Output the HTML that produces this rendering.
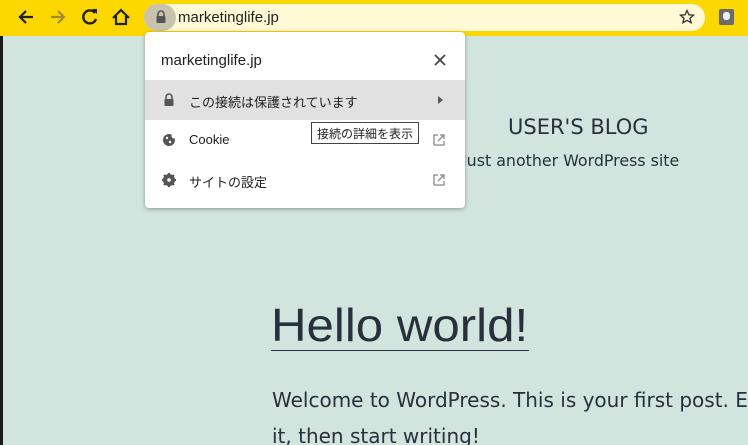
<!DOCTYPE html>
<html><head><meta charset="utf-8"><style>
*{margin:0;padding:0;box-sizing:border-box}
html,body{width:748px;height:445px;overflow:hidden}
body{background:#d1e4dd;font-family:"Liberation Sans","Noto Sans CJK JP",sans-serif;position:relative}
.bar{position:absolute;left:0;top:0;width:748px;height:36px;background:#fdd800}
.omni{position:absolute;left:144px;top:4px;width:561px;height:27px;border-radius:14px;background:#fff9d6}
.lockp{position:absolute;left:144px;top:4px;width:32px;height:27px;border-radius:14px;background:#c9c3ad}
.url{position:absolute;left:178px;top:9px;font-size:15px;color:#202124}
.strip{position:absolute;left:0;top:36px;width:3px;height:409px;background:#1a1a1a}
.pop{position:absolute;left:145px;top:32px;width:320px;height:176px;background:#fff;border-radius:4px;box-shadow:0 1px 4px rgba(0,0,0,.35)}
.pop .t{position:absolute;left:16px;top:20px;font-size:15px;color:#202124}
.row{position:absolute;left:0;width:320px;height:40px;font-size:13px;color:#202124}
.row span{position:absolute;left:44px;top:12px}
.tip{position:absolute;left:311px;top:122px;border:1px solid #444;background:#fff;font-size:12px;padding:2px 5px;color:#222;height:22px;white-space:nowrap}
.c{position:absolute;color:#28303d;font-family:"DejaVu Sans","Liberation Sans",sans-serif;white-space:nowrap}
</style></head><body>
<div class="bar"></div>
<svg style="position:absolute;left:0;top:0" width="140" height="36">
<path d="M33 17H20M26 11l-6 6 6 6" stroke="#202124" stroke-width="2.2" fill="none"/>
<path d="M51 17h13M58 11l6 6-6 6" stroke="#a08a30" stroke-width="2.2" fill="none"/>
<path d="M95 13a6.5 6.5 0 1 0 1 6" stroke="#202124" stroke-width="2.4" fill="none"/><path d="M92 9h5v5z" fill="#202124"/>
<path d="M113 18l8-8 8 8M116 16v8h10v-8" stroke="#202124" stroke-width="2.2" fill="none"/>
</svg>
<div class="omni"></div><div class="lockp"></div>
<svg style="position:absolute;left:155px;top:10px" width="12" height="14"><path d="M3 6V4a3 3 0 0 1 6 0v2" stroke="#555" stroke-width="1.6" fill="none"/><rect x="1.5" y="6" width="9" height="7" rx="1" fill="#555"/></svg>
<div class="url">marketinglife.jp</div>
<svg style="position:absolute;left:679px;top:9px" width="16" height="16"><path d="M8 1.5l1.9 4.3 4.6.4-3.5 3 1.1 4.5L8 11.4 3.9 13.7 5 9.2 1.5 6.2l4.6-.4z" stroke="#333" stroke-width="1.3" fill="none"/></svg>
<div style="position:absolute;left:719px;top:9px;width:15px;height:16px;background:#6b6b6b;border-radius:2px"></div>
<div style="position:absolute;left:723px;top:12px;width:7px;height:8px;background:#eee;border-radius:3px"></div>
<div class="strip"></div>
<div class="c" style="left:508px;top:115px;font-size:21px">USER'S BLOG</div>
<div class="c" style="left:462px;top:151px;font-size:16px;transform:scaleX(.99);transform-origin:left">Just another WordPress site</div>
<div class="c" style="left:271px;top:298px;font-size:46px;font-family:'Liberation Sans',sans-serif;transform:scaleX(1.07);transform-origin:left">Hello world!</div>
<div style="position:absolute;left:271px;top:350px;width:258px;height:1px;background:#28303d"></div>
<div class="c" style="left:272px;top:382px;font-size:20px;line-height:36px">Welcome to WordPress. This is your first post. Edit or delete<br>it, then start writing!</div>
<div class="pop">
<div class="t">marketinglife.jp</div>
<svg style="position:absolute;left:289px;top:22px" width="12" height="12"><path d="M1 1l10 10M11 1L1 11" stroke="#444" stroke-width="1.8"/></svg>
<div class="row" style="top:48px;background:#e1e1e1"><svg style="position:absolute;left:18px;top:13px" width="12" height="14"><path d="M3 6V4a3 3 0 0 1 6 0v2" stroke="#555" stroke-width="1.6" fill="none"/><rect x="1.5" y="6" width="9" height="7" rx="1" fill="#555"/></svg><span>この接続は保護されています</span><svg style="position:absolute;left:293px;top:16px" width="6" height="8"><path d="M0 0l5 4-5 4z" fill="#555"/></svg></div>
<div class="row" style="top:88px"><svg style="position:absolute;left:17px;top:13px" width="14" height="14"><circle cx="7" cy="7" r="6" fill="#555"/><circle cx="5" cy="5" r="1.2" fill="#fff"/><circle cx="8" cy="9" r="1.2" fill="#fff"/><circle cx="12" cy="3" r="2.5" fill="#fff"/></svg><span>Cookie</span><svg style="position:absolute;left:288px;top:14px" width="12" height="12"><path d="M5 1H1v10h10V7M7 1h4v4M11 1L5 7" stroke="#888" stroke-width="1.3" fill="none"/></svg></div>
<div class="row" style="top:128px"><svg style="position:absolute;left:17px;top:13px" width="14" height="14"><circle cx="7" cy="7" r="4.5" fill="none" stroke="#555" stroke-width="3"/><path d="M7 0v14M0 7h14M2 2l10 10M12 2L2 12" stroke="#555" stroke-width="2.2"/><circle cx="7" cy="7" r="1.8" fill="#fff"/></svg><span>サイトの設定</span><svg style="position:absolute;left:288px;top:14px" width="12" height="12"><path d="M5 1H1v10h10V7M7 1h4v4M11 1L5 7" stroke="#888" stroke-width="1.3" fill="none"/></svg></div>
</div>
<div class="tip">接続の詳細を表示</div>
</body></html>
